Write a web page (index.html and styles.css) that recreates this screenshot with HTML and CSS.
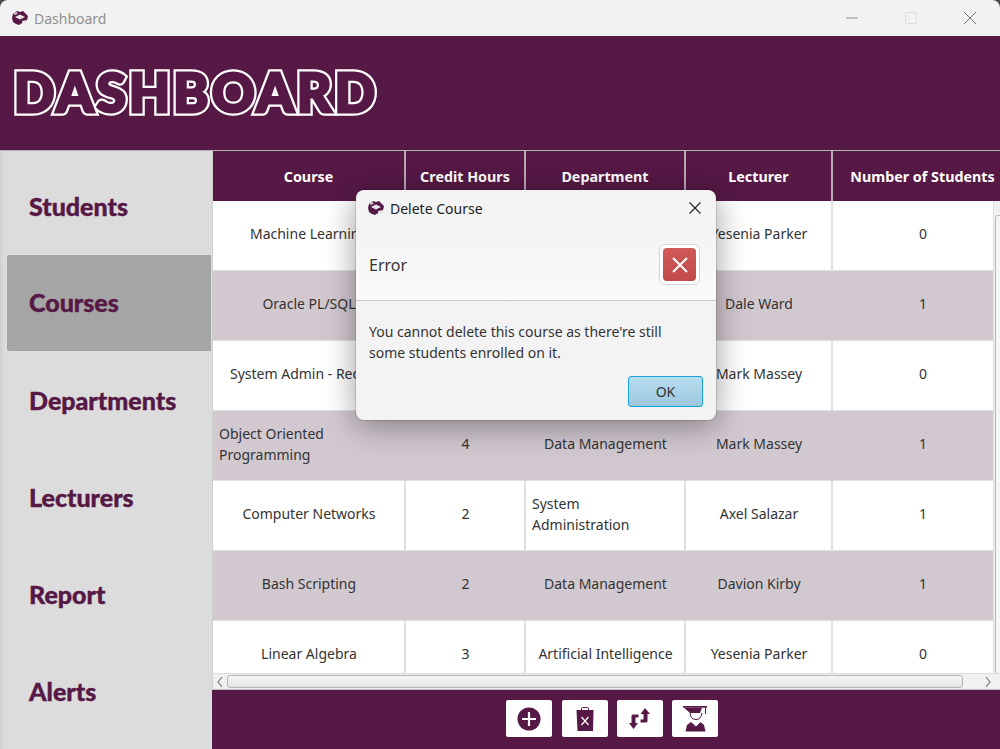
FILE: index.html
```html
<!DOCTYPE html>
<html>

<head>
	<meta charset="utf-8">
	<title>Dashboard</title>
	<link rel="stylesheet" href="styles.css">
</head>

<body>
	<div class="window">
		<div class="titlebar">
			<svg class="app_icon" viewBox="0 0 18 16">
				<path fill="#561845" d="M6 1 9 2 12 1 14 3 17 6 16 10 14 13 11 13 8 15 5 14 2 12 1 8 2 4Z" />
				<path fill="#e8e4e8" d="M4 7 9 4.500 14 7 9 9.500Z" />
				<path fill="#e8e4e8" d="M11 11 16 10 14.500 13 11.500 13.500Z" />
				<path fill="#d8d0d6" d="M3 3 6 2 6.500 4 3.500 5Z" />
			</svg>
			<span class="titlebar_text">Dashboard</span>
			<div class="win_buttons">
				<svg class="win_btn" viewBox="0 0 14 14"><path d="M1 7H13" stroke="#8c8c8c" fill="none" /></svg>
				<svg class="win_btn" viewBox="0 0 14 14"><rect x="1.500" y="1.500" width="11" height="11" rx="1.500" fill="none" stroke="#dedede" /></svg>
				<svg class="win_btn" viewBox="0 0 14 14"><path d="M1 1 13 13M13 1 1 13" stroke="#707070" fill="none" /></svg>
			</div>
		</div>

		<div class="header">
			<h1 class="header_title" data-text="DASHBOARD">DASHBOARD</h1>
		</div>

		<div class="main">
			<div class="sidebar">
				<div class="nav_item">Students</div>
				<div class="nav_item nav_active">Courses</div>
				<div class="nav_item">Departments</div>
				<div class="nav_item">Lecturers</div>
				<div class="nav_item">Report</div>
				<div class="nav_item">Alerts</div>
			</div>

			<div class="content">
				<div class="table_wrap">
					<table class="courses">
						<colgroup>
							<col class="col_course">
							<col class="col_hours">
							<col class="col_dept">
							<col class="col_lecturer">
							<col class="col_count">
						</colgroup>
						<thead>
							<tr>
								<th>Course</th>
								<th>Credit Hours</th>
								<th>Department</th>
								<th>Lecturer</th>
								<th>Number of Students</th>
							</tr>
						</thead>
						<tbody>
							<tr>
								<td>Machine Learning</td>
								<td></td>
								<td></td>
								<td>Yesenia Parker</td>
								<td>0</td>
							</tr>
							<tr>
								<td>Oracle PL/SQL</td>
								<td></td>
								<td></td>
								<td>Dale Ward</td>
								<td>1</td>
							</tr>
							<tr>
								<td>System Admin - Red Hat</td>
								<td></td>
								<td></td>
								<td>Mark Massey</td>
								<td>0</td>
							</tr>
							<tr>
								<td class="wrapped">Object Oriented Programming</td>
								<td>4</td>
								<td>Data Management</td>
								<td>Mark Massey</td>
								<td>1</td>
							</tr>
							<tr>
								<td>Computer Networks</td>
								<td>2</td>
								<td class="wrapped">System Administration</td>
								<td>Axel Salazar</td>
								<td>1</td>
							</tr>
							<tr>
								<td>Bash Scripting</td>
								<td>2</td>
								<td>Data Management</td>
								<td>Davion Kirby</td>
								<td>1</td>
							</tr>
							<tr>
								<td>Linear Algebra</td>
								<td>3</td>
								<td>Artificial Intelligence</td>
								<td>Yesenia Parker</td>
								<td>0</td>
							</tr>
						</tbody>
					</table>
					<!-- Vertical scrollbar, cut off by the window edge -->
					<div class="vscroll">
						<div class="vscroll_thumb"></div>
					</div>
				</div>

				<div class="hscroll">
					<svg class="arrow" viewBox="0 0 8 12"><path d="M6 1 2 6 6 11" fill="none" stroke="#777" stroke-width="1.200" /></svg>
					<div class="hscroll_thumb"></div>
					<svg class="arrow" viewBox="0 0 8 12"><path d="M2 1 6 6 2 11" fill="none" stroke="#777" stroke-width="1.200" /></svg>
				</div>

				<div class="footer">
					<div class="tool_btn">
						<svg viewBox="0 0 24 24" width="24" height="24">
							<circle cx="12" cy="12" r="11.500" fill="#561845" />
							<path d="M12 5V19M5 12H19" stroke="#fff" stroke-width="2.200" />
						</svg>
					</div>
					<div class="tool_btn">
						<svg viewBox="0 0 18 24" width="18" height="24">
							<path d="M5.500 3V1.500Q5.500 0.600 6.500 0.600H11.500Q12.500 0.600 12.500 1.500V3" fill="none" stroke="#561845" />
							<path d="M0.500 3H17.500L17 24H1.500Z" fill="#561845" />
							<path d="M5.500 10 12.500 18M12.500 10 5.500 18" stroke="#fff" stroke-width="1.200" />
						</svg>
					</div>
					<div class="tool_btn">
						<svg viewBox="0 0 21 21" width="21" height="21">
							<path d="M16 0 21 6H18.500V13Q18.500 14.500 17 14.500H11.500V11.500H14.500V6H11.500Z" fill="#561845" />
							<path d="M4.500 21 0 15H2.500V8Q2.500 6.500 4 6.500H9.500V9.500H6.500V15H9Z" fill="#561845" />
						</svg>
					</div>
					<div class="tool_btn">
						<svg viewBox="0 0 24 26" width="24" height="26">
							<path d="M0 0H24V1.700H0Z" fill="#561845" />
							<path d="M1 1.700 7 7H17L19 1.700Z" fill="#561845" />
							<path d="M22.500 1.700V8" stroke="#561845" fill="none" />
							<path d="M7 7Q7.500 13.500 13 13.500Q18 13.500 19 7" stroke="#561845" fill="none" />
							<path d="M2.500 25.500 4 19 8 16 13 20.500 17.500 16 21 19 22.500 25.500Z" fill="#561845" />
						</svg>
					</div>
				</div>
			</div>
		</div>

		<!-- Alert sits over the whole window -->
		<div class="dialog">
			<div class="dialog_title">
				<svg class="app_icon" viewBox="0 0 18 16">
					<path fill="#561845" d="M6 1 9 2 12 1 14 3 17 6 16 10 14 13 11 13 8 15 5 14 2 12 1 8 2 4Z" />
					<path fill="#e8e4e8" d="M4 7 9 4.500 14 7 9 9.500Z" />
					<path fill="#e8e4e8" d="M11 11 16 10 14.500 13 11.500 13.500Z" />
					<path fill="#d8d0d6" d="M3 3 6 2 6.500 4 3.500 5Z" />
				</svg>
				<span>Delete Course</span>
				<svg class="dialog_close" viewBox="0 0 12 12"><path d="M0.500 0.500 11.500 11.500M11.500 0.500 0.500 11.500" stroke="#222" stroke-width="1.100" fill="none" /></svg>
			</div>
			<div class="dialog_head">
				<span class="dialog_head_text">Error</span>
				<div class="error_frame">
					<div class="error_icon">
						<svg viewBox="0 0 16 16" width="16" height="16"><path d="M1 1 15 15M15 1 1 15" stroke="#fff" stroke-width="2" fill="none" /></svg>
					</div>
				</div>
			</div>
			<p class="dialog_msg">You cannot delete this course as there're still<br>some students enrolled on it.</p>
			<div class="dialog_actions">
				<div class="ok_btn">OK</div>
			</div>
		</div>
	</div>
</body>

</html>
```

FILE: styles.css
```css
html,
body {
	margin: 0;
	height: 100%;
	overflow: hidden;
	background-color: #4a4a4a;
}

.window {
	position: relative;
	display: flex;
	flex-direction: column;
	height: 749px;
	font-family: "Noto Sans", sans-serif;
	font-size: 14px;
	color: #333;
}

.titlebar {
	display: flex;
	align-items: center;
	flex: 0 0 36px;
	padding-left: 11px;
	background-color: #f2f2f2;
	border-radius: 8px 8px 0 0;
}

.app_icon {
	width: 18px;
	height: 16px;
}

.titlebar_text {
	margin-left: 5px;
	color: #8f8f8f;
	font-size: 14px;
}

.win_buttons {
	display: flex;
	margin-left: auto;
}

.win_btn {
	width: 14px;
	height: 14px;
	margin-left: 45px;
}

.win_btn:last-child {
	margin-right: 23px;
}

.header {
	display: flex;
	align-items: center;
	flex: 0 0 115px;
	box-sizing: border-box;
	padding-left: 14px;
	padding-bottom: 3px;
	background-color: #561845;
	border-bottom: 1px solid #b5b5b5;
}

/* chunky outlined title: white stroke below, a purple one over it to fatten the letters */
.header_title {
	position: relative;
	margin: 0;
	font-family: "Lato", sans-serif;
	font-weight: 900;
	font-size: 53px;
	letter-spacing: 3.2px;
	color: #561845;
	-webkit-text-stroke: 7.5px #fff;
}

.header_title::after {
	content: attr(data-text);
	position: absolute;
	left: 0;
	top: 0;
	-webkit-text-stroke: 3px #561845;
}

.main {
	display: flex;
	flex: 1;
	min-height: 0;
}

.sidebar {
	flex: 0 0 212px;
	box-sizing: border-box;
	padding: 7px 1px 0 7px;
	background: linear-gradient(to right, #cfcfcf, #dcdcdc 4px);
	overflow: hidden;
}

.nav_item {
	display: flex;
	align-items: center;
	box-sizing: border-box;
	height: 97px;
	padding-left: 22px;
	padding-bottom: 2px;
	font-family: "Lato", sans-serif;
	font-weight: 900;
	font-size: 25px;
	color: #561845;
	-webkit-text-stroke: 0.4px #561845;
}

.nav_active {
	height: 96px;
	margin-bottom: 1px;
	background-color: #a5a5a5;
	border-radius: 2px 0 0 2px;
}

.content {
	display: flex;
	flex-direction: column;
	flex: 1;
	min-width: 0;
}

.table_wrap {
	position: relative;
	flex: 1;
	min-height: 0;
	overflow: hidden;
	background-color: #fff;
	border-left: 1px solid #cfcfcf;
}

.courses {
	table-layout: fixed;
	width: 799px;
	border-collapse: separate;
	border-spacing: 0;
}

.col_course {
	width: 193px;
}

.col_hours {
	width: 120px;
}

.col_dept {
	width: 160px;
}

.col_lecturer {
	width: 147px;
}

.col_count {
	width: 179px;
}

.courses th {
	height: 50px;
	padding: 0;
	box-sizing: border-box;
	background-color: #561845;
	border-right: 2px solid #b9a9b5;
	color: #fff;
	font-weight: bold;
	font-size: 14.3px;
}

.courses th:last-child {
	border-right: 0;
}

.courses td {
	height: 70px;
	padding: 0 5px 4px 6px;
	box-sizing: border-box;
	text-align: center;
	line-height: 21px;
	border-right: 2px solid #e0e0e0;
	border-bottom: 1px solid #e0e0e0;
}

.courses td:last-child {
	border-right: 0;
}

.courses td.wrapped {
	text-align: left;
}

.courses tbody tr:nth-child(even) td {
	background-color: #d2c9d0;
	border-right-color: #d2c9d0;
}

.vscroll {
	position: absolute;
	top: 50px;
	right: 0;
	bottom: 0;
	width: 5px;
	padding-top: 14px;
	padding-left: 1px;
	background-color: #f1f1f1;
	border-left: 1px solid #e0e0e0;
}

.vscroll_thumb {
	height: 100%;
	margin-right: -6px;
	background-color: #f5f5f5;
	border: 1px solid #b5b5b5;
	border-radius: 3px;
}

.hscroll {
	display: flex;
	align-items: center;
	flex: 0 0 17px;
	box-sizing: border-box;
	padding-left: 3px;
	background-color: #f1f1f1;
	border-top: 1px solid #dcdcdc;
	border-bottom: 1px solid #c0c0c0;
	border-left: 1px solid #cfcfcf;
}

.arrow {
	width: 8px;
	height: 12px;
}

.hscroll_thumb {
	flex: 0 0 736px;
	height: 13px;
	box-sizing: border-box;
	margin: 0 21px 0 3px;
	background: linear-gradient(#f5f5f5, #e4e4e4);
	border: 1px solid #b5b5b5;
	border-radius: 3px;
}

.footer {
	display: flex;
	justify-content: center;
	gap: 9.33px;
	flex: 0 0 59px;
	box-sizing: border-box;
	padding-top: 10px;
	padding-left: 12.6px;
	background-color: #561845;
}

.tool_btn {
	display: flex;
	align-items: center;
	justify-content: center;
	width: 46px;
	height: 37px;
	background-color: #fff;
	border-radius: 2px;
}

.dialog {
	position: absolute;
	left: 356px;
	top: 190px;
	width: 360px;
	height: 230px;
	background-color: #f3f3f3;
	border-radius: 8px;
	box-shadow: 0 6px 32px rgba(0, 0, 0, 0.4), 0 0 0 1px rgba(0, 0, 0, 0.12);
	overflow: hidden;
}

.dialog_title {
	display: flex;
	align-items: center;
	height: 36px;
	padding-left: 11px;
	color: #222;
}

.dialog_title span {
	margin-left: 5px;
}

.dialog_close {
	width: 12px;
	height: 12px;
	margin-left: auto;
	margin-right: 15px;
}

.dialog_head {
	display: flex;
	align-items: center;
	justify-content: space-between;
	box-sizing: border-box;
	height: 75px;
	padding: 3px 16px 0 13px;
	background: linear-gradient(#f3f3f3, #fafafa);
	border-bottom: 1px solid #c8c8c8;
}

.dialog_head_text {
	font-size: 16px;
}

.error_frame {
	box-sizing: border-box;
	width: 41px;
	height: 41px;
	padding: 3px;
	background-color: #fff;
	border: 1px solid #d5d5d5;
	border-radius: 6px;
}

.error_icon {
	display: flex;
	align-items: center;
	justify-content: center;
	height: 100%;
	background: linear-gradient(#cf5a58, #c24a48);
	border-radius: 4px;
}

.dialog_msg {
	margin: 20px 0 0 13px;
	line-height: 21px;
	font-size: 14px;
}

.dialog_actions {
	display: flex;
	justify-content: flex-end;
	margin: 13px 13px 0 0;
}

.ok_btn {
	box-sizing: border-box;
	width: 75px;
	height: 31px;
	line-height: 29px;
	text-align: center;
	background: linear-gradient(#b6dcee, #9ec8de);
	border: 1px solid #17a3dc;
	border-radius: 3px;
}
```
